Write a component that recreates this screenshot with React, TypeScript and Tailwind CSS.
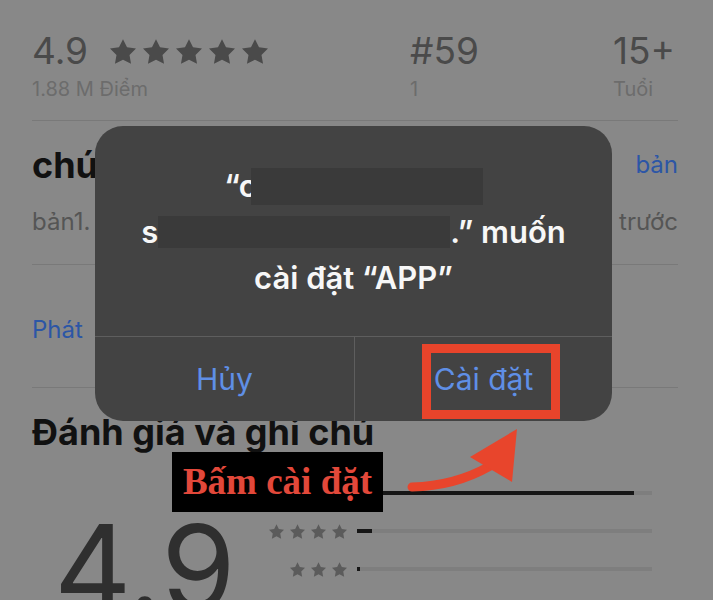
import React from 'react';

const STAR = '12,2 15.09,8.26 22,9.27 17,14.14 18.18,21.02 12,17.77 5.82,21.02 7,14.14 2,9.27 8.91,8.26';

function Star({ className }: { className: string }) {
  return (
    <svg viewBox="2 2 20 19.02" className={className}>
      <polygon points={STAR} fill="currentColor" />
    </svg>
  );
}

function RatingRow({ stars, fill }: { stars: number; fill: number }) {
  return (
    <div className="flex items-center h-[38px]">
      <div className="w-[99px] flex justify-end gap-[6px] text-[#5b5b5b]">
        {Array.from({ length: stars }).map((_, i) => (
          <Star key={i} className="w-[15px] h-[15px]" />
        ))}
      </div>
      <div className="ml-[10px] flex-1 h-[4px] bg-[#7e7e7e]">
        <div className="h-full bg-[#161616]" style={{ width: `${fill}%` }} />
      </div>
    </div>
  );
}

export default function App() {
  return (
    <div
      className="relative w-[713px] h-[600px] overflow-hidden bg-[#888888]"
      style={{ fontFamily: 'Inter, "Noto Sans", sans-serif' }}
    >
      {/* dimmed app store page */}
      <div className="pl-[32px] pr-[35px]">
        <div className="h-[121px] border-b border-[#797979] pt-[31px] flex">
          <div className="w-[378px]">
            <div className="flex items-center h-[40px]">
              <span className="text-[37px] leading-[40px] text-[#4a4a4a]">4.9</span>
              <div className="ml-[22px] flex gap-[7px] text-[#4a4a4a]">
                {[0, 1, 2, 3, 4].map((i) => (
                  <Star key={i} className="w-[26px] h-[25px]" />
                ))}
              </div>
            </div>
            <div className="mt-[6px] text-[20px] leading-[24px] text-[#6c6c6c]">1.88 M Điểm</div>
          </div>
          <div className="w-[203px]">
            <div className="text-[37px] leading-[40px] text-[#4a4a4a]">#59</div>
            <div className="mt-[6px] text-[20px] leading-[24px] text-[#6c6c6c]">1</div>
          </div>
          <div>
            <div className="text-[37px] leading-[40px] text-[#4a4a4a]">15+</div>
            <div className="mt-[6px] text-[20px] leading-[24px] text-[#6c6c6c]">Tuổi</div>
          </div>
        </div>

        <div className="h-[144px] border-b border-[#797979] pt-[22px]">
          <div className="flex justify-between items-center h-[44px]">
            <span className="text-[36px] font-bold text-[#111111]">chú</span>
            <span className="text-[24px] text-[#2c56a6]">bản</span>
          </div>
          <div className="mt-[19px] flex justify-between items-center h-[32px] text-[24px] text-[#555555]">
            <span>bản1.</span>
            <span>trước</span>
          </div>
        </div>

        <div className="h-[123px] border-b border-[#797979] pt-[49px]">
          <div className="h-[32px] leading-[32px] text-[24px] text-[#2c56a6]">Phát</div>
        </div>

        <div className="mt-[22px] h-[44px] leading-[44px] text-[36px] font-bold text-[#111111]">
          Đánh giá và ghi chú
        </div>

        <div className="flex">
          <div className="w-[216px] pl-[22px] pt-[54px] text-[120px] leading-none text-[#2f2f2f]">4.9</div>
          <div className="w-[404px] pt-[20px]">
            <RatingRow stars={5} fill={94} />
            <RatingRow stars={4} fill={5} />
            <RatingRow stars={3} fill={1} />
          </div>
        </div>
      </div>

      {/* install alert */}
      <div className="absolute left-[95px] top-[126px] w-[517px] h-[295px] rounded-[28px] bg-[#434343] overflow-hidden flex flex-col">
        <div className="h-[210px] pt-[37px] text-[31px] font-semibold text-[#f7f7f7]">
          <div className="h-[46px] flex items-center justify-center">
            <span>“c</span>
            <span className="-ml-[6px] w-[232px] h-[37px] bg-[#3a3a3a]" />
          </div>
          <div className="h-[46px] flex items-center justify-center">
            <span>s</span>
            <span className="w-[292px] h-[32px] bg-[#3a3a3a]" />
            <span>.” muốn</span>
          </div>
          <div className="h-[46px] flex items-center justify-center">cài đặt “APP”</div>
        </div>
        <div className="flex-1 flex border-t border-[#5e5e5e] text-[30px] text-[#5f8fe6]">
          <div className="w-[260px] border-r border-[#5e5e5e] flex items-center justify-center">Hủy</div>
          <div className="relative flex-1 flex items-center justify-center">
            <span>Cài đặt</span>
            <div className="absolute left-[67px] top-[7px] w-[138px] h-[75px] border-[9px] border-[#e8442b]" />
          </div>
        </div>
      </div>

      {/* annotation */}
      <div
        className="absolute left-[172px] top-[452px] w-[211px] h-[60px] bg-black flex items-center justify-center text-[37px] font-bold text-[#e2483a]"
        style={{ fontFamily: '"Liberation Serif", serif' }}
      >
        Bấm cài đặt
      </div>
      <svg className="absolute left-[400px] top-[420px] w-[130px] h-[80px]" viewBox="400 420 130 80">
        <path d="M412 487 Q455 486 490 466" fill="none" stroke="#e8452c" strokeWidth="9" strokeLinecap="round" />
        <polygon points="517,429 470,457 512,482" fill="#e8452c" />
      </svg>
    </div>
  );
}
